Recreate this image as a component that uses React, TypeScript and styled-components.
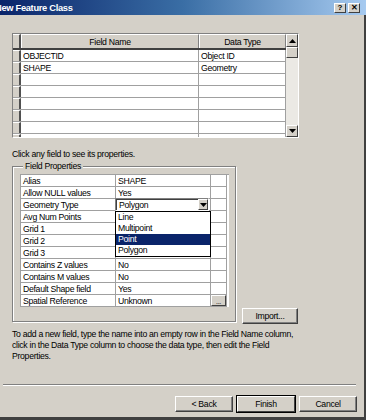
import React from "react";
import styled, { createGlobalStyle } from "styled-components";

const Global = createGlobalStyle`
  html, body { margin: 0; padding: 0; background: #d4d0c8; }
  body {
    width: 366px; height: 420px; overflow: hidden;
    font-family: "Liberation Sans", Arial, sans-serif;
    font-size: 8.7px; letter-spacing: -0.3px; color: #000;
  }
  * { box-sizing: border-box; }
`;

const Window = styled.div`
  width: 366px;
  height: 420px;
  background: #d4d0c8;
  display: flex;
  flex-direction: column;
  overflow: hidden;
  border-bottom: 3px solid #404040;
`;

const TitleBar = styled.div`
  height: 15px;
  flex: none;
  background: linear-gradient(to right, #0a246a 0%, #3a6ea5 50%, #a6caf0 100%);
  display: flex;
  align-items: center;
  padding-right: 6px;
`;

const TitleText = styled.div`
  flex: 1;
  margin-left: -5px;
  color: #fff;
  font-weight: bold;
  font-size: 9.3px;
  letter-spacing: -0.3px;
  white-space: nowrap;
`;

const CaptionButton = styled.div`
  width: 12px;
  height: 10px;
  margin-left: 2px;
  background: #d4d0c8;
  border: 1px solid;
  border-color: #fff #404040 #404040 #fff;
  display: flex;
  align-items: center;
  justify-content: center;
  font-size: 8px;
  font-weight: bold;
  line-height: 1;
  letter-spacing: 0;
`;

const Body = styled.div`
  flex: 1;
  display: flex;
  flex-direction: column;
  padding: 18px 0 0 12px;
  border-right: 2px solid #404040;
`;

const DataGrid = styled.div`
  width: 287px;
  height: 105px;
  display: flex;
  border: 1px solid;
  border-color: #808080 #fff #fff #808080;
  background: #fff;
`;

const GridTable = styled.div`
  flex: 1;
  overflow: hidden;
  display: flex;
  flex-direction: column;
`;

const GridRow = styled.div<{ $header?: boolean }>`
  display: flex;
  flex: none;
  height: ${(p) => (p.$header ? "16px" : "12px")};
  border-bottom: ${(p) => (p.$header ? "2px solid #404040" : "1px solid #a0a0a0")};
`;

const RowHead = styled.div`
  width: 8px;
  flex: none;
  background: #d4d0c8;
  border-top: 1px solid #fff;
  border-right: 2px solid #505050;
`;

const HeadCell = styled.div<{ $w?: number }>`
  width: ${(p) => (p.$w ? `${p.$w}px` : "auto")};
  flex: ${(p) => (p.$w ? "none" : "1")};
  background: #d4d0c8;
  border-top: 1px solid #fff;
  border-left: 1px solid #fff;
  border-right: 1px solid #808080;
  display: flex;
  align-items: center;
  justify-content: center;
`;

const GridCell = styled.div<{ $w?: number }>`
  width: ${(p) => (p.$w ? `${p.$w}px` : "auto")};
  flex: ${(p) => (p.$w ? "none" : "1")};
  border-right: 1px solid #a0a0a0;
  padding-left: 2px;
  display: flex;
  align-items: center;
  white-space: nowrap;
`;

const ScrollBar = styled.div`
  width: 12px;
  flex: none;
  display: flex;
  flex-direction: column;
  background: #ebe9e4;
`;

const ScrollButton = styled.div<{ $h: number }>`
  height: ${(p) => p.$h}px;
  flex: none;
  background: #d4d0c8;
  border: 1px solid;
  border-color: #fff #404040 #404040 #fff;
  display: flex;
  align-items: center;
  justify-content: center;
`;

const Track = styled.div`
  flex: 1;
`;

const Arrow = ({ down }: { down?: boolean }) => (
  <svg width="7" height="4" viewBox="0 0 7 4">
    {down ? <polygon points="0,0 7,0 3.5,4" fill="#000" /> : <polygon points="0,4 7,4 3.5,0" fill="#000" />}
  </svg>
);

const Hint = styled.div`
  margin-top: 10px;
  height: 12px;
  line-height: 12px;
`;

const MiddleRow = styled.div`
  display: flex;
  align-items: flex-end;
  margin-top: 1px;
`;

const GroupBox = styled.fieldset`
  width: 224px;
  height: 161px;
  margin: 0;
  padding: 3px 6px 0 7px;
  border: 1px solid #808080;
  box-shadow: inset 1px 1px 0 #fff, 1px 1px 0 #fff;
`;

const Legend = styled.legend`
  padding: 0 2px;
  margin-left: 3px;
  background: #d4d0c8;
  line-height: 10px;
`;

const PropTable = styled.div`
  display: grid;
  grid-template-columns: 95px 95px 16px;
  border-top: 1px solid #a0a0a0;
  border-left: 1px solid #a0a0a0;
  background: #fff;
`;

const PropCell = styled.div`
  height: 12px;
  border-right: 1px solid #a0a0a0;
  border-bottom: 1px solid #a0a0a0;
  padding-left: 2px;
  display: flex;
  align-items: center;
  white-space: nowrap;
  position: relative;
`;

const Combo = styled.div`
  position: absolute;
  left: -1px;
  top: -1px;
  width: 94px;
  height: 13px;
  background: #fff;
  border: 1px solid;
  border-color: #808080 #fff #fff #808080;
  box-shadow: inset 1px 1px 0 #404040;
  display: flex;
  align-items: center;
  padding-left: 3px;
`;

const ComboText = styled.span`
  flex: 1;
`;

const ComboButton = styled.div`
  width: 10px;
  height: 11px;
  background: #d4d0c8;
  border: 1px solid;
  border-color: #fff #404040 #404040 #fff;
  display: flex;
  align-items: center;
  justify-content: center;
`;

const DropList = styled.div`
  position: absolute;
  left: -1px;
  top: 12px;
  width: 96px;
  z-index: 2;
  background: #fff;
  border: 1px solid #000;
`;

const DropItem = styled.div<{ $sel?: boolean }>`
  height: 11px;
  line-height: 11px;
  padding-left: 2px;
  background: ${(p) => (p.$sel ? "#0a246a" : "#fff")};
  color: ${(p) => (p.$sel ? "#fff" : "#000")};
`;

const DotsButton = styled.div`
  position: absolute;
  inset: 0;
  background: #d4d0c8;
  border: 1px solid;
  border-color: #fff #404040 #404040 #fff;
  font-size: 7px;
  display: flex;
  align-items: flex-end;
  justify-content: center;
  line-height: 1;
`;

const Button = styled.div<{ $w: number; $default?: boolean }>`
  width: ${(p) => p.$w}px;
  height: 16px;
  flex: none;
  background: #d4d0c8;
  border: 1px solid;
  border-color: #fff #404040 #404040 #fff;
  box-shadow: ${(p) => (p.$default ? "0 0 0 1px #000" : "inset -1px -1px 0 #808080")};
  display: flex;
  align-items: center;
  justify-content: center;
`;

const ImportButton = styled(Button)`
  margin-left: 6px;
  margin-bottom: -2px;
`;

const Description = styled.div`
  margin-top: 7px;
  line-height: 11px;
  white-space: nowrap;
`;

const Separator = styled.div`
  margin: 22px 0 0 -9px;
  width: 353px;
  height: 2px;
  border-top: 1px solid #808080;
  border-bottom: 1px solid #fff;
`;

const ButtonRow = styled.div`
  display: flex;
  justify-content: flex-end;
  gap: 4px;
  margin-top: 10px;
  padding-right: 7px;
`;

const gridRows = [
  ["OBJECTID", "Object ID"],
  ["SHAPE", "Geometry"],
  ["", ""],
  ["", ""],
  ["", ""],
  ["", ""],
  ["", ""],
  ["", ""],
];

const props: [string, string][] = [
  ["Alias", "SHAPE"],
  ["Allow NULL values", "Yes"],
  ["Geometry Type", "combo"],
  ["Avg Num Points", ""],
  ["Grid 1", ""],
  ["Grid 2", ""],
  ["Grid 3", ""],
  ["Contains Z values", "No"],
  ["Contains M values", "No"],
  ["Default Shape field", "Yes"],
  ["Spatial Reference", "Unknown"],
];

export default function App() {
  return (
    <>
      <Global />
      <Window>
        <TitleBar>
          <TitleText>New Feature Class</TitleText>
          <CaptionButton>?</CaptionButton>
          <CaptionButton>✕</CaptionButton>
        </TitleBar>
        <Body>
          <DataGrid>
            <GridTable>
              <GridRow $header>
                <RowHead />
                <HeadCell $w={178}>Field Name</HeadCell>
                <HeadCell>Data Type</HeadCell>
              </GridRow>
              {gridRows.map(([a, b], i) => (
                <GridRow key={i}>
                  <RowHead />
                  <GridCell $w={178}>{a}</GridCell>
                  <GridCell>{b}</GridCell>
                </GridRow>
              ))}
            </GridTable>
            <ScrollBar>
              <ScrollButton $h={13}>
                <Arrow />
              </ScrollButton>
              <ScrollButton $h={11} />
              <Track />
              <ScrollButton $h={12}>
                <Arrow down />
              </ScrollButton>
            </ScrollBar>
          </DataGrid>
          <Hint>Click any field to see its properties.</Hint>
          <MiddleRow>
            <GroupBox>
              <Legend>Field Properties</Legend>
              <PropTable>
                {props.map(([name, value], i) => (
                  <React.Fragment key={i}>
                    <PropCell>{name}</PropCell>
                    <PropCell>
                      {value === "combo" ? (
                        <Combo>
                          <ComboText>Polygon</ComboText>
                          <ComboButton>
                            <Arrow down />
                          </ComboButton>
                          <DropList>
                            <DropItem>Line</DropItem>
                            <DropItem>Multipoint</DropItem>
                            <DropItem $sel>Point</DropItem>
                            <DropItem>Polygon</DropItem>
                          </DropList>
                        </Combo>
                      ) : (
                        value
                      )}
                    </PropCell>
                    <PropCell>{name === "Spatial Reference" ? <DotsButton>...</DotsButton> : null}</PropCell>
                  </React.Fragment>
                ))}
              </PropTable>
            </GroupBox>
            <ImportButton $w={56}>Import...</ImportButton>
          </MiddleRow>
          <Description>
            To add a new field, type the name into an empty row in the Field Name column,
            <br />
            click in the Data Type column to choose the data type, then edit the Field
            <br />
            Properties.
          </Description>
          <Separator />
          <ButtonRow>
            <Button $w={58}>&lt; Back</Button>
            <Button $w={58} $default>
              Finish
            </Button>
            <Button $w={58}>Cancel</Button>
          </ButtonRow>
        </Body>
      </Window>
    </>
  );
}
